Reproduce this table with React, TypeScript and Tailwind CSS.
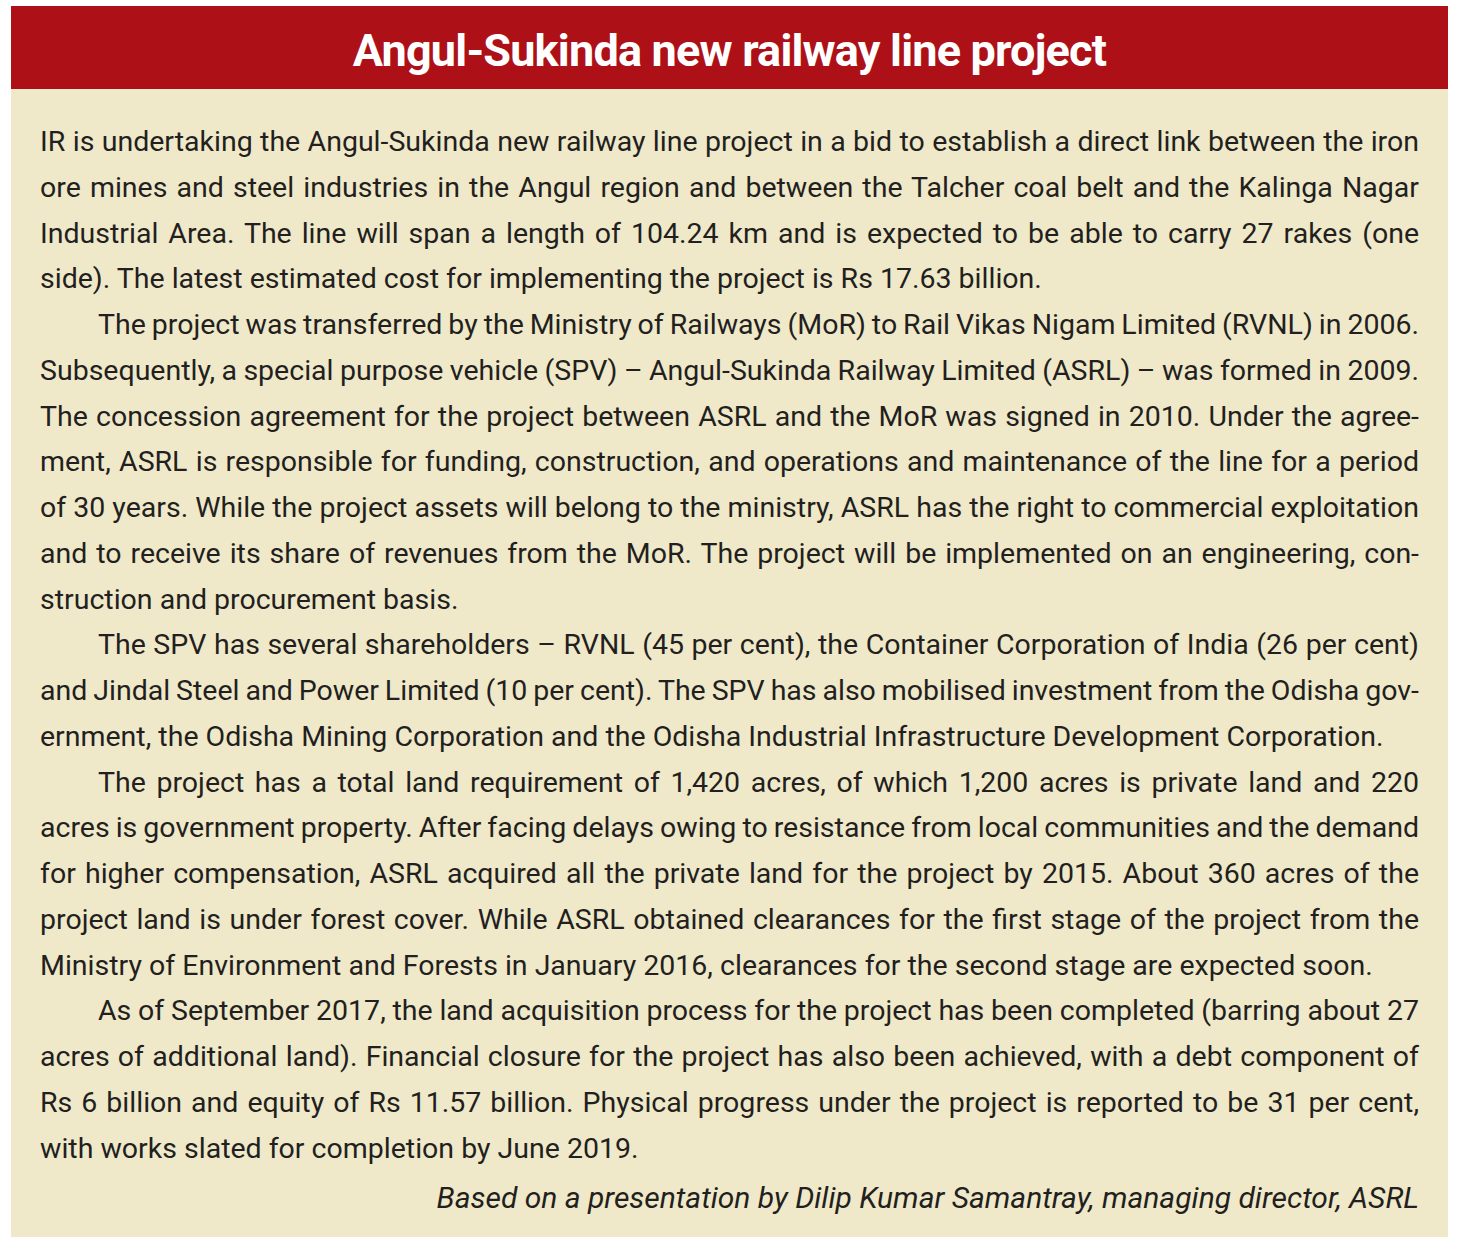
const paragraphs: string[][] = [
  [
    "IR is undertaking the Angul-Sukinda new railway line project in a bid to establish a direct link between the iron",
    "ore mines and steel industries in the Angul region and between the Talcher coal belt and the Kalinga Nagar",
    "Industrial Area. The line will span a length of 104.24 km and is expected to be able to carry 27 rakes (one",
    "side). The latest estimated cost for implementing the project is Rs 17.63 billion.",
  ],
  [
    "The project was transferred by the Ministry of Railways (MoR) to Rail Vikas Nigam Limited (RVNL) in 2006.",
    "Subsequently, a special purpose vehicle (SPV) – Angul-Sukinda Railway Limited (ASRL) – was formed in 2009.",
    "The concession agreement for the project between ASRL and the MoR was signed in 2010. Under the agree-",
    "ment, ASRL is responsible for funding, construction, and operations and maintenance of the line for a period",
    "of 30 years. While the project assets will belong to the ministry, ASRL has the right to commercial exploitation",
    "and to receive its share of revenues from the MoR. The project will be implemented on an engineering, con-",
    "struction and procurement basis.",
  ],
  [
    "The SPV has several shareholders – RVNL (45 per cent), the Container Corporation of India (26 per cent)",
    "and Jindal Steel and Power Limited (10 per cent). The SPV has also mobilised investment from the Odisha gov-",
    "ernment, the Odisha Mining Corporation and the Odisha Industrial Infrastructure Development Corporation.",
  ],
  [
    "The project has a total land requirement of 1,420 acres, of which 1,200 acres is private land and 220",
    "acres is government property. After facing delays owing to resistance from local communities and the demand",
    "for higher compensation, ASRL acquired all the private land for the project by 2015. About 360 acres of the",
    "project land is under forest cover. While ASRL obtained clearances for the first stage of the project from the",
    "Ministry of Environment and Forests in January 2016, clearances for the second stage are expected soon.",
  ],
  [
    "As of September 2017, the land acquisition process for the project has been completed (barring about 27",
    "acres of additional land). Financial closure for the project has also been achieved, with a debt component of",
    "Rs 6 billion and equity of Rs 11.57 billion. Physical progress under the project is reported to be 31 per cent,",
    "with works slated for completion by June 2019.",
  ],
];

function Paragraph({ lines, indent }: { lines: string[]; indent: boolean }) {
  return (
    <div>
      {lines.map((line, i) => {
        const last = i === lines.length - 1;
        return (
          <div
            key={i}
            className={
              "whitespace-nowrap " +
              (last ? "text-left " : "text-justify [text-align-last:justify] [word-spacing:-3px] ") +
              (indent && i === 0 ? "pl-[58px]" : "")
            }
          >
            {line}
          </div>
        );
      })}
    </div>
  );
}

export default function App() {
  return (
    <div className="min-h-screen bg-white pt-[6px] pl-[11px] pr-[10px] pb-[9px]">
      <div className="bg-[#efe9c9]">
        <div className="h-[83px] bg-[#ad1117] flex items-center justify-center pt-[6px]">
          <h1 className="font-['Roboto',sans-serif] font-bold text-[45px] tracking-[-0.8px] leading-none text-white">
            Angul-Sukinda new railway line project
          </h1>
        </div>
        <div className="px-[29px] pt-[30px] pb-[16px] font-['Roboto',sans-serif] text-[28.5px] leading-[45.75px] text-[#231f20]">
          {paragraphs.map((p, i) => (
            <Paragraph key={i} lines={p} indent={i > 0} />
          ))}
          <div className="mt-[4px] text-right italic text-[30px]">
            Based on a presentation by Dilip Kumar Samantray, managing director, ASRL
          </div>
        </div>
      </div>
    </div>
  );
}
